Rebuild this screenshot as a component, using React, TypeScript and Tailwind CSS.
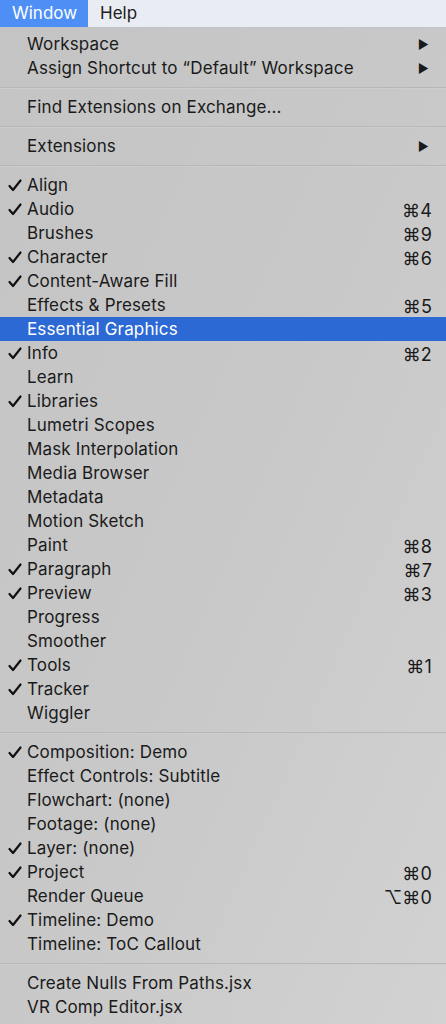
import React from 'react';

type Item =
  | { sep: true }
  | { label: string; check?: boolean; shortcut?: string; sub?: boolean; active?: boolean };

const items: Item[] = [
  { label: 'Workspace', sub: true },
  { label: 'Assign Shortcut to \u201CDefault\u201D Workspace', sub: true },
  { sep: true },
  { label: 'Find Extensions on Exchange...' },
  { sep: true },
  { label: 'Extensions', sub: true },
  { sep: true },
  { label: 'Align', check: true },
  { label: 'Audio', check: true, shortcut: '\u23184' },
  { label: 'Brushes', shortcut: '\u23189' },
  { label: 'Character', check: true, shortcut: '\u23186' },
  { label: 'Content-Aware Fill', check: true },
  { label: 'Effects & Presets', shortcut: '\u23185' },
  { label: 'Essential Graphics', active: true },
  { label: 'Info', check: true, shortcut: '\u23182' },
  { label: 'Learn' },
  { label: 'Libraries', check: true },
  { label: 'Lumetri Scopes' },
  { label: 'Mask Interpolation' },
  { label: 'Media Browser' },
  { label: 'Metadata' },
  { label: 'Motion Sketch' },
  { label: 'Paint', shortcut: '\u23188' },
  { label: 'Paragraph', check: true, shortcut: '\u23187' },
  { label: 'Preview', check: true, shortcut: '\u23183' },
  { label: 'Progress' },
  { label: 'Smoother' },
  { label: 'Tools', check: true, shortcut: '\u23181' },
  { label: 'Tracker', check: true },
  { label: 'Wiggler' },
  { sep: true },
  { label: 'Composition: Demo', check: true },
  { label: 'Effect Controls: Subtitle' },
  { label: 'Flowchart: (none)' },
  { label: 'Footage: (none)' },
  { label: 'Layer: (none)', check: true },
  { label: 'Project', check: true, shortcut: '\u23180' },
  { label: 'Render Queue', shortcut: '\u2325\u23180' },
  { label: 'Timeline: Demo', check: true },
  { label: 'Timeline: ToC Callout' },
  { sep: true },
  { label: 'Create Nulls From Paths.jsx' },
  { label: 'VR Comp Editor.jsx' },
];

function Check() {
  return (
    <svg width="14" height="13" viewBox="0 0 14 13" className="absolute left-[8px] top-[6px]">
      <path d="M1.5 7 L5 11 L12.5 1.5" fill="none" stroke="#111" strokeWidth="2.2" strokeLinecap="round" strokeLinejoin="round" />
    </svg>
  );
}

export default function App() {
  return (
    <div
      className="w-[446px] h-[1024px] overflow-hidden bg-gradient-to-br from-[#c4c4c4] via-[#c8c8c8] to-[#d2d2d2] text-[#1a1a1a]"
      style={{ fontFamily: 'Inter, "Liberation Sans", Roboto, sans-serif' }}
    >
      <div className="h-[28px] flex items-stretch bg-[#e9edf3] border-b border-[#c2c4c8] text-[17px]">
        <div className="w-[88px] bg-[#4d8ff4] text-white flex items-center pl-[12px]">Window</div>
        <div className="flex items-center pl-[12px] text-[#202020]">Help</div>
      </div>
      <div className="pt-[4px]">
        {items.map((it, i) =>
          'sep' in it ? (
            <div key={i} className="h-[15px] flex items-center">
              <div className="w-full h-[2px] bg-[#b7b7b7] border-b border-[#cdcdcd]" />
            </div>
          ) : (
            <div
              key={i}
              className={`relative h-[24px] flex items-center pt-[2px] pl-[27px] pr-[14px] text-[17px] tracking-[0.15px] ${
                it.active ? 'bg-[#2c69d4] text-white' : ''
              }`}
            >
              {it.check && <Check />}
              <span className="flex-1 whitespace-nowrap">{it.label}</span>
              {it.shortcut && <span className="whitespace-nowrap text-[18px]">{it.shortcut}</span>}
              {it.sub && <span className="text-[12px] mr-[3px]">{'\u25B6'}</span>}
            </div>
          )
        )}
      </div>
    </div>
  );
}
